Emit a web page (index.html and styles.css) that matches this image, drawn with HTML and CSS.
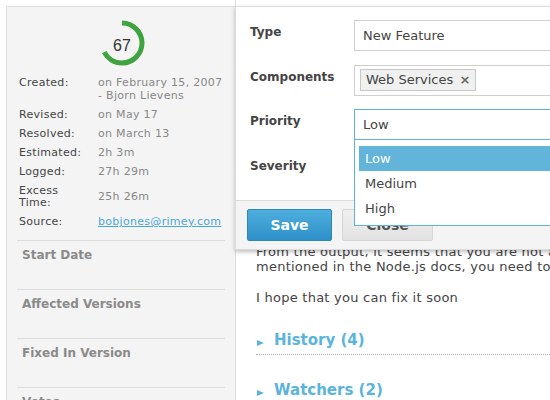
FILE: index.html
```html
<!DOCTYPE html>
<html>
<head>
<meta charset="utf-8">
<title>Issue</title>
<link rel="stylesheet" href="styles.css">
</head>
<body>
<div class="page">
  <aside class="sidebar">
    <div class="score">
      <svg class="ring" width="46" height="46" viewBox="0 0 46 46">
        <circle cx="23" cy="23" r="20" fill="none" stroke="#3fa33f" stroke-width="5" stroke-dasharray="84.2 200" transform="rotate(-90 23 23)"/>
      </svg>
      <span class="score-num">67</span>
    </div>
    <dl class="meta">
      <dt>Created:</dt><dd>on February 15, 2007<br>- Bjorn Lievens</dd>
      <dt>Revised:</dt><dd>on May 17</dd>
      <dt>Resolved:</dt><dd>on March 13</dd>
      <dt>Estimated:</dt><dd>2h 3m</dd>
      <dt>Logged:</dt><dd>27h 29m</dd>
      <dt>Excess<br>Time:</dt><dd class="mid">25h 26m</dd>
      <dt>Source:</dt><dd><a class="link" href="#">bobjones@rimey.com</a></dd>
    </dl>
    <div class="side-sec">Start Date</div>
    <div class="side-sec">Affected Versions</div>
    <div class="side-sec">Fixed In Version</div>
    <div class="side-sec">Votes</div>
  </aside>

  <main class="main">
    <p class="para">From the output, it seems that you are not able to load the module as<br>mentioned in the Node.js docs, you need to set the path correctly</p>
    <p class="para">I hope that you can fix it soon</p>
    <h3 class="toggle toggle-line"><span class="tri"></span>History (4)</h3>
    <h3 class="toggle"><span class="tri"></span>Watchers (2)</h3>
  </main>

  <div class="modal">
    <div class="modal-body">
      <div class="form-row">
        <label class="lbl">Type</label>
        <div class="field">New Feature</div>
      </div>
      <div class="form-row">
        <label class="lbl">Components</label>
        <div class="field field-tags"><span class="tag">Web Services <span class="tag-x">×</span></span></div>
      </div>
      <div class="form-row">
        <label class="lbl">Priority</label>
        <div class="select-wrap">
          <div class="field field-focus">Low</div>
          <ul class="dropdown">
            <li class="opt opt-active">Low</li>
            <li class="opt">Medium</li>
            <li class="opt">High</li>
          </ul>
        </div>
      </div>
      <div class="form-row">
        <label class="lbl">Severity</label>
        <div class="field">Minor</div>
      </div>
    </div>
    <div class="modal-foot">
      <button class="btn btn-save">Save</button>
      <button class="btn btn-close">Close</button>
    </div>
  </div>
</div>
</body>
</html>
```
FILE: styles.css
```css
* { box-sizing: border-box; }
html, body { margin: 0; padding: 0; }
body {
  width: 550px;
  height: 400px;
  overflow: hidden;
  background: #fff;
  font-family: "DejaVu Sans", Verdana, sans-serif;
  color: #444;
}
.page {
  position: relative;
  display: flex;
  align-items: flex-start;
  height: 400px;
}
.sidebar {
  width: 229px;
  margin: 6px 0 0 6px;
  min-height: 420px;
  background: #f4f4f4;
  border-top: 1px solid #dedede;
  border-left: 1px solid #dedede;
  padding: 0 10px 0 10px;
}
.score {
  position: relative;
  width: 46px;
  height: 46px;
  margin: 13px auto 0;
  left: 1px;
}
.ring { display: block; }
.score-num {
  position: absolute;
  left: 0; right: 0; top: 0;
  line-height: 51px;
  text-align: center;
  font-family: "Liberation Sans", Arial, sans-serif;
  font-size: 16px;
  color: #333;
}
.meta {
  display: grid;
  grid-template-columns: 79px 1fr;
  row-gap: 6.5px;
  margin: 11px 0 0 2px;
  font-size: 11px;
  line-height: 12.5px;
  letter-spacing: 0.3px;
}
.meta dt { color: #444; margin: 0; }
.meta dd { color: #888; margin: 0; }
.meta dd.mid { align-self: center; }
.link { color: #4aa8d8; text-decoration: underline; }
.side-sec {
  margin-top: 11px;
  height: 49px;
  border-top: 1px solid #dcdcdc;
  padding: 7px 0 0 5px;
  font-size: 12px;
  font-weight: bold;
  color: #8a8a8a;
  line-height: 15px;
}
.side-sec + .side-sec { margin-top: 0; }
.main {
  flex: 1;
  align-self: stretch;
  border-left: 1px solid #dedede;
  padding: 244px 0 0 20px;
  white-space: nowrap;
  overflow: hidden;
}
.para {
  margin: 0 0 15.5px;
  font-size: 13px;
  line-height: 15px;
  letter-spacing: 0.25px;
  color: #444;
}
.toggle {
  margin: 25.5px 0 0;
  font-size: 15px;
  line-height: 20px;
  font-weight: bold;
  color: #5ab4dc;
  padding-left: 1px;
}
.toggle-line {
  padding-bottom: 4px;
  border-bottom: 1px dotted #b0b0b0;
}
.toggle + .toggle { margin-top: 25px; }
.tri {
  display: inline-block;
  width: 0; height: 0;
  border-left: 7px solid #5ab4dc;
  border-top: 3.5px solid transparent;
  border-bottom: 3.5px solid transparent;
  margin-right: 10px;
  vertical-align: -1px;
}
.modal {
  position: absolute;
  top: 6px;
  left: 235px;
  width: 420px;
  background: #fff;
  border: 1px solid #dcdcdc;
  box-shadow: 0 2px 4px rgba(0,0,0,0.25);
  z-index: 5;
}
.modal-body {
  padding: 13px 0 15.5px 14px;
  display: flex;
  flex-direction: column;
  gap: 13.5px;
}
.form-row {
  display: grid;
  grid-template-columns: 104px 1fr;
  align-items: start;
}
.lbl {
  padding-top: 5px;
  font-size: 12px;
  line-height: 15px;
  font-weight: bold;
  color: #444;
}
.field {
  height: 31px;
  border: 1px solid #cfcfcf;
  background: #fff;
  padding: 0 8px;
  font-size: 13px;
  line-height: 29px;
  color: #444;
}
.field-tags { padding: 3px 5px; line-height: 21px; }
.tag {
  display: inline-block;
  height: 22px;
  padding: 0 5px 0 5px;
  background: #f0f0f0;
  border: 1px solid #c8c8c8;
  font-size: 13px;
  line-height: 20px;
  color: #444;
}
.tag-x { font-weight: bold; color: #666; margin-left: 2px; }
.select-wrap { position: relative; }
.field-focus { border-color: #5ab4dc; }
.dropdown {
  position: absolute;
  top: 30px;
  left: 0; right: 0;
  margin: 0;
  list-style: none;
  padding: 6px 0 4px 4px;
  background: #fff;
  border: 1px solid #5ab4dc;
  z-index: 10;
}
.opt {
  height: 25px;
  line-height: 25px;
  padding-left: 6px;
  font-size: 13px;
  color: #444;
}
.opt-active { background: #62b4da; color: #fff; }
.modal-foot {
  border-top: 1px solid #dcdcdc;
  background: #f4f4f4;
  padding: 8px 11px 8px;
  display: flex;
  gap: 10px;
}
.btn {
  height: 32px;
  font-family: "DejaVu Sans", Verdana, sans-serif;
  font-size: 14px;
  font-weight: bold;
  border-radius: 2px;
  padding: 0;
}
.btn-save {
  width: 85px;
  color: #fff;
  background: linear-gradient(#4eaede, #2e90c8);
  border: 1px solid #2a86bd;
}
.btn-close {
  width: 91px;
  color: #555;
  background: linear-gradient(#f0f0f0, #e2e2e2);
  border: 1px solid #d6d6d6;
}
```
